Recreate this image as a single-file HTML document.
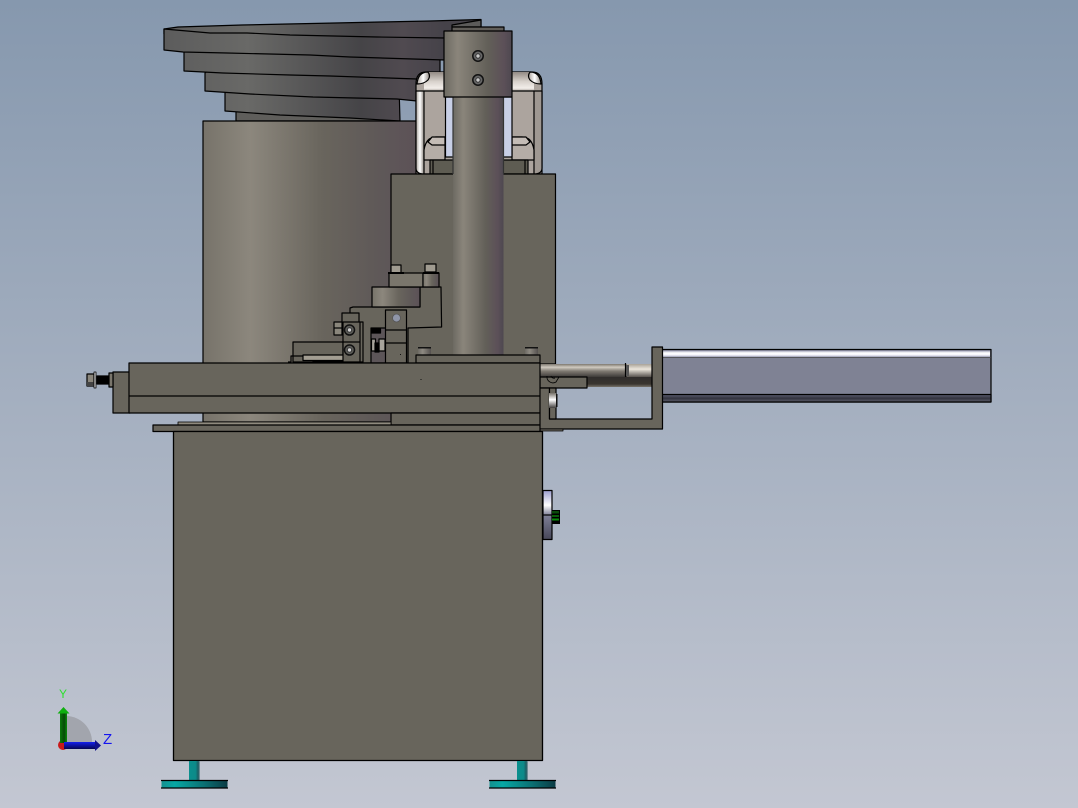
<!DOCTYPE html>
<html><head><meta charset="utf-8"><style>html,body{margin:0;padding:0;width:1078px;height:808px;overflow:hidden}svg{display:block}</style></head><body>
<svg width="1078" height="808" viewBox="0 0 1078 808" xmlns="http://www.w3.org/2000/svg" font-family="'Liberation Sans',sans-serif">
<defs>
<linearGradient id="bg" x1="0" y1="0" x2="0" y2="1"><stop offset="0" stop-color="#8698ae"/><stop offset="1" stop-color="#c3c7d2"/></linearGradient>
<linearGradient id="cyl" x1="0" x2="1" y1="0" y2="0"><stop offset="0" stop-color="#77736a"/><stop offset=".22" stop-color="#8c877d"/><stop offset=".55" stop-color="#69655d"/><stop offset=".8" stop-color="#5f5958"/><stop offset="1" stop-color="#5c5157"/></linearGradient>
<linearGradient id="plate" gradientUnits="userSpaceOnUse" x1="164" x2="445" y1="0" y2="0"><stop offset="0" stop-color="#5c5c5c"/><stop offset=".3" stop-color="#696967"/><stop offset=".7" stop-color="#454447"/><stop offset=".85" stop-color="#504a50"/><stop offset="1" stop-color="#454249"/></linearGradient>
<linearGradient id="post" x1="0" x2="1" y1="0" y2="0"><stop offset="0" stop-color="#6d6a62"/><stop offset=".2" stop-color="#8a857b"/><stop offset=".65" stop-color="#625f58"/><stop offset=".88" stop-color="#5c5058"/><stop offset="1" stop-color="#4d4850"/></linearGradient>
<linearGradient id="top" x1="0" x2="0" y1="0" y2="1"><stop offset="0" stop-color="#928a84"/><stop offset=".5" stop-color="#d8d2cc"/><stop offset=".85" stop-color="#f2eeea"/><stop offset="1" stop-color="#b0a8a2"/></linearGradient>
<linearGradient id="side" x1="0" x2="1" y1="0" y2="0"><stop offset="0" stop-color="#a8a09a"/><stop offset=".5" stop-color="#fff"/><stop offset="1" stop-color="#8f8882"/></linearGradient>
<linearGradient id="rod" x1="0" x2="0" y1="0" y2="1"><stop offset="0" stop-color="#7d786f"/><stop offset=".25" stop-color="#cfc9bf"/><stop offset=".55" stop-color="#7f7a72"/><stop offset="1" stop-color="#3d3a38"/></linearGradient>
<linearGradient id="rod2" x1="0" x2="0" y1="0" y2="1"><stop offset="0" stop-color="#a8a298"/><stop offset=".4" stop-color="#ece6dc"/><stop offset="1" stop-color="#57534e"/></linearGradient>
<linearGradient id="rod3" x1="0" x2="0" y1="0" y2="1"><stop offset="0" stop-color="#302d2c"/><stop offset=".7" stop-color="#39352f"/><stop offset="1" stop-color="#77726a"/></linearGradient>
<linearGradient id="strip" x1="0" x2="0" y1="0" y2="1"><stop offset="0" stop-color="#9a9bb5"/><stop offset=".35" stop-color="#fff"/><stop offset=".65" stop-color="#f2f2fa"/><stop offset="1" stop-color="#8385a0"/></linearGradient>
<linearGradient id="strip2" x1="0" x2="0" y1="0" y2="1"><stop offset="0" stop-color="#5c5e72"/><stop offset=".5" stop-color="#34343f"/><stop offset="1" stop-color="#5a5c6a"/></linearGradient>
<linearGradient id="knob" x1="0" x2="0" y1="0" y2="1"><stop offset="0" stop-color="#9b9dcf"/><stop offset=".3" stop-color="#fff"/><stop offset=".5" stop-color="#7e7f96"/><stop offset="1" stop-color="#474759"/></linearGradient>
<linearGradient id="teal" x1="0" x2="1" y1="0" y2="0"><stop offset="0" stop-color="#14908f"/><stop offset=".2" stop-color="#07a8a4"/><stop offset=".65" stop-color="#0b6f72"/><stop offset="1" stop-color="#0b3b44"/></linearGradient>
<linearGradient id="stem" x1="0" x2="1" y1="0" y2="0"><stop offset="0" stop-color="#0a8f8d"/><stop offset=".6" stop-color="#0d8a89"/><stop offset=".85" stop-color="#1c5a60"/><stop offset="1" stop-color="#8ea0aa"/></linearGradient>
<linearGradient id="stud" x1="0" x2="0" y1="0" y2="1"><stop offset="0" stop-color="#77726a"/><stop offset=".45" stop-color="#fff"/><stop offset="1" stop-color="#3f3c3a"/></linearGradient>
<linearGradient id="gb" x1="0" x2="1" y1="0" y2="0"><stop offset="0" stop-color="#0a7a0a"/><stop offset=".6" stop-color="#064a06"/><stop offset="1" stop-color="#0a8a0a"/></linearGradient>
<linearGradient id="bb" x1="0" x2="0" y1="0" y2="1"><stop offset="0" stop-color="#1420ee"/><stop offset="1" stop-color="#050552"/></linearGradient>
<linearGradient id="pin" x1="0" x2="1" y1="0" y2="0"><stop offset="0" stop-color="#6d6a64"/><stop offset=".35" stop-color="#8e8a82"/><stop offset="1" stop-color="#55514f"/></linearGradient>
</defs>
<rect width="1078" height="808" fill="url(#bg)"/>

<g stroke="#000" stroke-width="1.2" stroke-linejoin="round">
<!-- spiral bowl (back to front) -->
<polygon points="164,29 178,27 242,25 288,24 335,23 380,22 430,21 481,19.500 481,40 445,45 300,45 164,34" fill="url(#plate)"/>
<polygon points="236,112 250,100 399,110 399,121 236,121" fill="#5f5e5b"/>
<polygon points="225,93 240,80 399,85 400,121 350,118 280,115 225,111" fill="url(#plate)"/>
<polygon points="205,73 220,60 417,65 417,101 397,99 313,97 250,94 205,91" fill="url(#plate)"/>
<polygon points="184,52 200,40 440,45 440,80 417,79 330,76 290,75 223,73 184,71" fill="url(#plate)"/>
<polygon points="164,29 210,33 247,33 290,35 377,37 445,38 445,60 350,57 310,55 227,53 183,52 164,50" fill="url(#plate)"/>
<polygon points="452,25 481,20 481,27 452,27" fill="#5c5b5a"/>

<!-- drum -->
<rect x="203" y="121" width="216" height="301" fill="url(#cyl)"/>

<!-- motor bracket -->
<path d="M416 84Q416 72 426 72H532Q542 72 542 84V174H416Z" fill="#aca49e"/>
<rect x="424" y="72" width="110" height="19" fill="url(#top)" stroke="none"/>
<line x1="424" y1="91" x2="534" y2="91"/>
<path d="M416 91V168Q416 174 424 174V91Z" fill="url(#side)"/>
<path d="M534 91V174Q542 174 542 168V91Z" fill="#9f9892"/>
<path d="M417 84Q418 72 428 72Q431 76 428 80Q424 84 417 84Z" fill="url(#side)"/>
<path d="M541 84Q540 72 530 72Q527 76 530 80Q534 84 541 84Z" fill="url(#side)"/>
<path d="M424 150Q426 137 436 137H445V160H424Z" fill="#b5ada7"/>
<path d="M534 150Q532 137 522 137H512V160H534Z" fill="#b5ada7"/>
<path d="M428 142L432 137H445V145H432Z" fill="#c4bcb6"/><path d="M530 142L526 137H512V145H526Z" fill="#c4bcb6"/>
<rect x="430" y="160" width="98" height="14" fill="#5e5c52"/>
<line x1="433" y1="160" x2="433" y2="174"/><line x1="525" y1="160" x2="525" y2="174"/>
<rect x="445.500" y="97" width="8" height="60" fill="#c8cfe6"/>
<rect x="503" y="97" width="9" height="60" fill="#c8cfe6"/>

<!-- upper block -->
<rect x="391" y="174" width="164.500" height="190" fill="#68655c"/>
<!-- post -->
<rect x="453" y="97" width="50.500" height="260" fill="url(#post)" stroke="none"/>
<line x1="453" y1="97" x2="453" y2="174" stroke="#333"/><line x1="503.500" y1="97" x2="503.500" y2="174" stroke="#333"/>
<rect x="452" y="27" width="52" height="5" fill="#605d58"/>
<rect x="444" y="31" width="68" height="66" fill="url(#post)"/>
<g fill="#666" stroke="#111" stroke-width="1.500"><circle cx="478" cy="56" r="5.200"/><circle cx="478" cy="80" r="5.200"/></g>
<g fill="#c8c8c8" stroke="#333" stroke-width="1"><circle cx="478" cy="56" r="2.200"/><circle cx="478" cy="80" r="2.200"/></g>

<!-- mechanism -->
<polygon points="350,314 350,308 353,307 372,307 420,307 420,287 441,287 441.600,327 408,328 408,363 350,363" fill="#68655c"/>
<rect x="372" y="287" width="48" height="20" fill="url(#cyl)"/>
<rect x="389" y="273" width="34" height="14" fill="#7a766c"/>
<rect x="423" y="273" width="16" height="14" fill="url(#cyl)"/>
<rect x="391" y="265" width="10" height="8" fill="#a09b90"/><rect x="425" y="264" width="11" height="8" fill="#a09b90"/>
<line x1="388" y1="273" x2="404" y2="273" stroke-width="2"/><line x1="423" y1="273" x2="439" y2="273" stroke-width="2"/>
<rect x="371" y="328" width="15" height="35" fill="#5c5558"/>
<rect x="371.500" y="329" width="9" height="4" fill="#000"/>
<rect x="371.500" y="339" width="4" height="12" fill="#a8a49c"/><rect x="379" y="339" width="6" height="12" fill="#a8a49c"/>
<rect x="375" y="343" width="4" height="9" fill="#000"/>
<rect x="385.500" y="310" width="21" height="53" fill="#68655c"/>
<line x1="385.500" y1="330" x2="406.500" y2="330"/><line x1="385.500" y1="343" x2="406.500" y2="343"/>
<circle cx="396.500" cy="318" r="4" fill="#8f95a8" stroke="#555" stroke-width=".8"/>
<rect x="293" y="342" width="50" height="20" fill="#68655c"/>
<rect x="303" y="355" width="41" height="5.500" fill="#a39e92"/>
<polyline points="288,362 291,362 291,356 303,356" fill="none"/>
<rect x="313" y="361" width="32" height="2" fill="#000"/>
<rect x="342" y="313" width="17" height="10" fill="#68655c"/>
<rect x="343" y="322" width="20" height="40" fill="#68655c"/>
<line x1="343" y1="342" x2="360" y2="342"/><line x1="360" y1="322" x2="360" y2="362"/>
<rect x="334" y="322" width="8" height="13" fill="#8a867c"/><line x1="334" y1="328" x2="342" y2="328"/>
<g fill="#5c5c58" stroke="#111" stroke-width="1.500"><circle cx="349.500" cy="330" r="5"/><circle cx="349.500" cy="350" r="5"/></g>
<g fill="#ccc" stroke="#333" stroke-width="1"><circle cx="349.500" cy="330" r="2.200"/><circle cx="349.500" cy="350" r="2.200"/></g>
<rect x="418" y="347" width="13" height="8" fill="url(#pin)" stroke="none"/><rect x="418" y="347" width="13" height="1.500" fill="#111" stroke="none"/>
<rect x="525" y="347" width="13" height="8" fill="url(#pin)" stroke="none"/><rect x="525" y="347" width="13" height="1.500" fill="#111" stroke="none"/>
<rect x="416" y="355" width="124" height="8" fill="#68655c"/>

<!-- cylinder body -->
<rect x="662" y="349.500" width="329" height="52.500" fill="#7f8294"/>
<rect x="663" y="350.500" width="327" height="7" fill="url(#strip)" stroke="none"/>
<line x1="662" y1="357.500" x2="991" y2="357.500" stroke="#444" stroke-width=".7"/>
<rect x="662" y="394.500" width="329" height="7.500" fill="url(#strip2)"/>

<!-- actuator bracket rods -->
<rect x="587" y="377" width="66" height="10" fill="url(#rod3)" stroke="none"/>
<rect x="627" y="364" width="26" height="13" fill="url(#rod2)" stroke="none"/>
<rect x="540" y="364" width="87" height="13" fill="url(#rod)" stroke="none"/>
<line x1="625.500" y1="363" x2="625.500" y2="377"/>
<rect x="626" y="365" width="3" height="11" fill="#555" stroke="none"/>
<polygon points="540,377 587,377 587,388 540,388" fill="#68655c"/>
<path d="M547 376a6 6 0 0 0 9 6l3-5M551 376a3 3 0 0 0 4 2" fill="none" stroke-width=".8"/>
<path d="M539.500 388H549.500V419H652V347H662.500V429H539.500Z" fill="#68655c"/>
<rect x="549.500" y="388" width="6.500" height="31" fill="#68655c"/>
<rect x="549" y="393" width="7" height="15" fill="url(#stud)" stroke="none"/>
<rect x="556" y="394" width="1.500" height="13" fill="#111" stroke="none"/>
<rect x="539" y="429" width="24" height="2" fill="#68655c" stroke-width=".8"/>

<!-- table -->
<rect x="113" y="372" width="17" height="41" fill="#68655c"/>
<rect x="129" y="363" width="411" height="50" fill="#68655c"/>
<line x1="129" y1="396" x2="540" y2="396"/>
<rect x="391" y="413" width="149" height="12" fill="#68655c"/>
<rect x="178" y="422" width="213" height="3" fill="#8f8a7e" stroke-width=".8"/>
<rect x="153" y="425" width="387" height="6.500" fill="#68655c"/>
<rect x="420.500" y="379" width="1" height="1" fill="#111" stroke="none"/>
<rect x="400" y="354" width="1" height="1" fill="#111" stroke="none"/>

<!-- left bolt -->
<rect x="87" y="374" width="7" height="12" fill="#8a867c"/><rect x="87" y="382" width="7" height="4" fill="#444" stroke="none"/>
<rect x="94" y="372" width="2" height="16" fill="#ddd" stroke-width=".8"/>
<rect x="97" y="376" width="13" height="8" fill="#000"/>
<rect x="109" y="373" width="4" height="14" fill="#7a766c"/>

<!-- base -->
<rect x="173.500" y="431.500" width="369" height="329" fill="#68655c" stroke-width="1.300"/>

<!-- knob -->
<rect x="543" y="490.500" width="9" height="49" fill="url(#knob)"/>
<line x1="543" y1="515" x2="552" y2="515"/>
<rect x="552" y="510" width="8" height="14" fill="#000" stroke="none"/>
<rect x="552" y="511" width="7" height="2.500" fill="#0a4a0a" stroke="none"/><rect x="552" y="515" width="7" height="2" fill="#0a5a0a" stroke="none"/><rect x="552" y="518.500" width="7" height="2" fill="#0a8a0a" stroke="none"/>

<!-- feet -->
<rect x="189" y="761" width="11" height="19" fill="url(#stem)" stroke="none"/>
<rect x="161.500" y="780.500" width="66" height="7.500" fill="url(#teal)" stroke="none"/>
<line x1="161" y1="780.500" x2="228" y2="780.500"/><line x1="161" y1="788" x2="228" y2="788"/>
<rect x="517" y="761" width="11" height="19" fill="url(#stem)" stroke="none"/>
<rect x="489.500" y="780.500" width="66" height="7.500" fill="url(#teal)" stroke="none"/>
<line x1="489" y1="780.500" x2="556" y2="780.500"/><line x1="489" y1="788" x2="556" y2="788"/>
</g>

<!-- triad -->
<path d="M66 716A26 26 0 0 1 92 742H66Z" fill="#a2a5ad"/>
<circle cx="63" cy="745" r="5" fill="#c81a1a"/>
<rect x="60" y="713" width="7" height="30" fill="url(#gb)"/>
<polygon points="63.500,707 69.500,713.500 57.500,713.500" fill="#0fb00f"/>
<rect x="64" y="742" width="31" height="7" fill="url(#bb)"/>
<polygon points="101,745.500 95,740 95,751" fill="#10108a"/>
<text x="59" y="698" font-size="12" fill="#2fe02f">Y</text>
<text x="103" y="744" font-size="15" fill="#1414f0">Z</text>
</svg>
</body></html>
